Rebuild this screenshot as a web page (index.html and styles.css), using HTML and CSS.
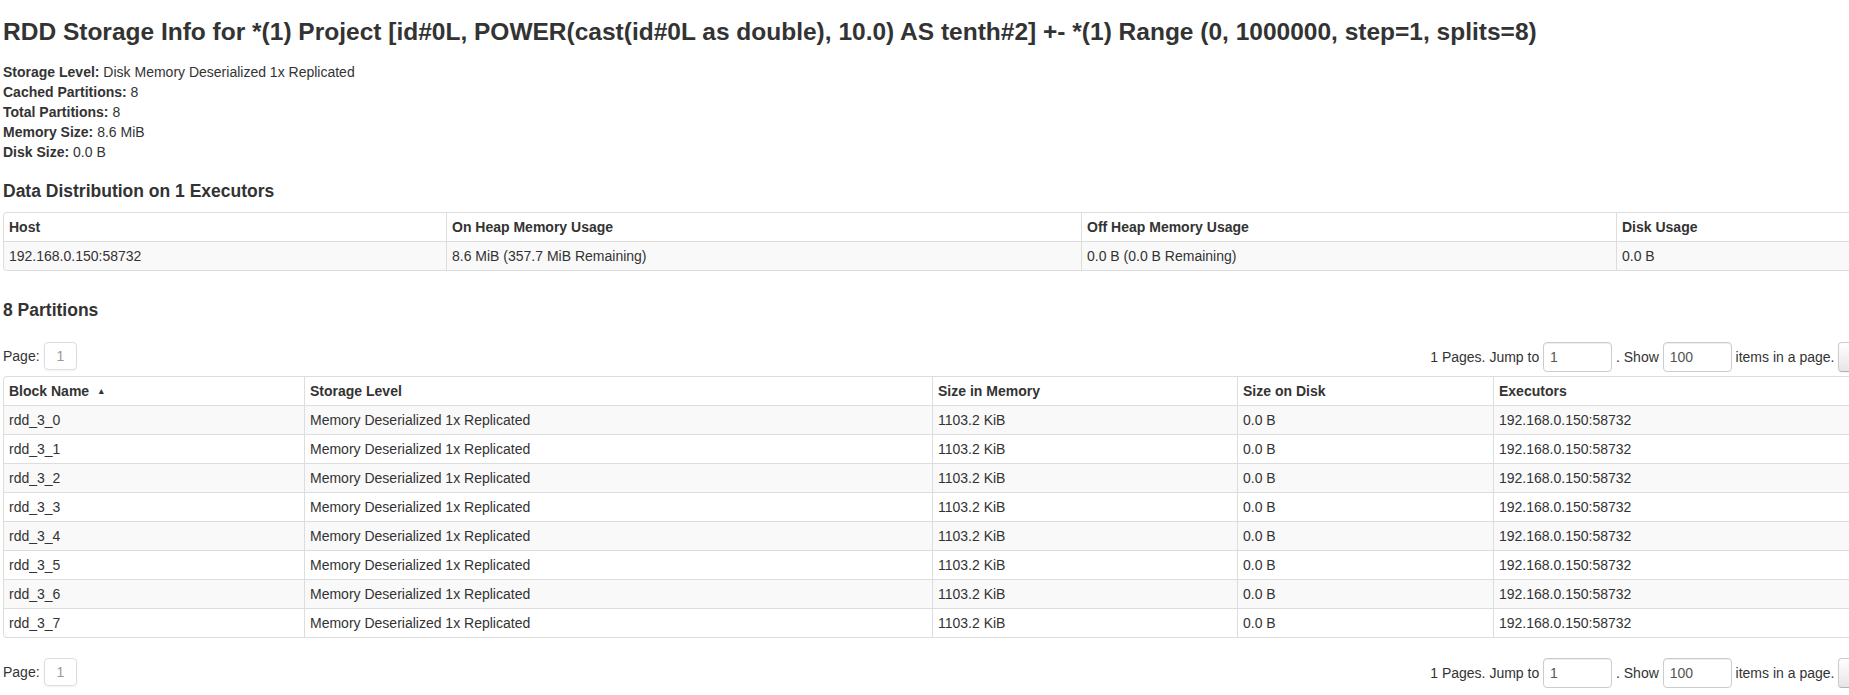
FILE: index.html
```html
<!DOCTYPE html>
<html>
<head>
<meta charset="utf-8">
<title>RDD Storage Info</title>
<link rel="stylesheet" href="styles.css">
</head>
<body>
<div class="page">
  <h3 class="title">RDD Storage Info for *(1) Project [id#0L, POWER(cast(id#0L as double), 10.0) AS tenth#2] +- *(1) Range (0, 1000000, step=1, splits=8)</h3>
  <ul class="summary">
    <li><strong>Storage Level:</strong> Disk Memory Deserialized 1x Replicated</li>
    <li><strong>Cached Partitions:</strong> 8</li>
    <li><strong>Total Partitions:</strong> 8</li>
    <li><strong>Memory Size:</strong> 8.6 MiB</li>
    <li><strong>Disk Size:</strong> 0.0 B</li>
  </ul>

  <h4 class="section first">Data Distribution on 1 Executors</h4>
  <table class="grid">
    <colgroup>
      <col class="e1"><col class="e2"><col class="e3"><col class="e4">
    </colgroup>
    <thead>
      <tr><th>Host</th><th>On Heap Memory Usage</th><th>Off Heap Memory Usage</th><th>Disk Usage</th></tr>
    </thead>
    <tbody>
      <tr><td>192.168.0.150:58732</td><td>8.6 MiB (357.7 MiB Remaining)</td><td>0.0 B (0.0 B Remaining)</td><td>0.0 B</td></tr>
    </tbody>
  </table>

  <h4 class="section second">8 Partitions</h4>

  <div class="pager top">
    <div class="pages"><span class="pages-label">Page:</span><span class="page-box">1</span></div>
    <form class="jump">
      <label>1 Pages. Jump to</label> <input class="field" type="text" value="1"> <label>. Show</label> <input class="field" type="text" value="100"> <label>items in a page.</label> <button type="button" class="btn">Go</button>
    </form>
  </div>

  <table class="grid blocks">
    <colgroup>
      <col class="b1"><col class="b2"><col class="b3"><col class="b4"><col class="b5">
    </colgroup>
    <thead>
      <tr><th>Block Name<span class="arrow">&#x25B4;</span></th><th>Storage Level</th><th>Size in Memory</th><th>Size on Disk</th><th>Executors</th></tr>
    </thead>
    <tbody>
      <tr><td>rdd_3_0</td><td>Memory Deserialized 1x Replicated</td><td>1103.2 KiB</td><td>0.0 B</td><td>192.168.0.150:58732</td></tr>
      <tr><td>rdd_3_1</td><td>Memory Deserialized 1x Replicated</td><td>1103.2 KiB</td><td>0.0 B</td><td>192.168.0.150:58732</td></tr>
      <tr><td>rdd_3_2</td><td>Memory Deserialized 1x Replicated</td><td>1103.2 KiB</td><td>0.0 B</td><td>192.168.0.150:58732</td></tr>
      <tr><td>rdd_3_3</td><td>Memory Deserialized 1x Replicated</td><td>1103.2 KiB</td><td>0.0 B</td><td>192.168.0.150:58732</td></tr>
      <tr><td>rdd_3_4</td><td>Memory Deserialized 1x Replicated</td><td>1103.2 KiB</td><td>0.0 B</td><td>192.168.0.150:58732</td></tr>
      <tr><td>rdd_3_5</td><td>Memory Deserialized 1x Replicated</td><td>1103.2 KiB</td><td>0.0 B</td><td>192.168.0.150:58732</td></tr>
      <tr><td>rdd_3_6</td><td>Memory Deserialized 1x Replicated</td><td>1103.2 KiB</td><td>0.0 B</td><td>192.168.0.150:58732</td></tr>
      <tr><td>rdd_3_7</td><td>Memory Deserialized 1x Replicated</td><td>1103.2 KiB</td><td>0.0 B</td><td>192.168.0.150:58732</td></tr>
    </tbody>
  </table>

  <div class="pager bottom">
    <div class="pages"><span class="pages-label">Page:</span><span class="page-box">1</span></div>
    <form class="jump">
      <label>1 Pages. Jump to</label> <input class="field" type="text" value="1"> <label>. Show</label> <input class="field" type="text" value="100"> <label>items in a page.</label> <button type="button" class="btn">Go</button>
    </form>
  </div>
</div>
</body>
</html>
```

FILE: styles.css
```css
html, body {
  margin: 0;
  padding: 0;
  background: #fff;
  overflow: hidden;
}

body {
  font-family: "Liberation Sans", Arial, Helvetica, sans-serif;
  font-size: 14px;
  line-height: 20px;
  color: #333;
}

.page {
  display: flex;
  flex-direction: column;
  width: 1880px;
  margin-left: 3px;
}

.title {
  margin: 12px 0 0;
  font-size: 24.5px;
  line-height: 40px;
  font-weight: bold;
  color: #333;
  white-space: nowrap;
}

.summary {
  list-style: none;
  margin: 10px 0 0;
  padding: 0;
}

.summary li {
  line-height: 20px;
}

.section {
  margin: 0;
  font-size: 17.5px;
  line-height: 20px;
  font-weight: bold;
}

.section.first {
  margin-top: 19px;
}

.section.second {
  margin-top: 29px;
}

.grid {
  width: 1880px;
  table-layout: fixed;
  border-collapse: separate;
  border-spacing: 0;
  border: 1px solid #ddd;
  border-left: 0;
  border-radius: 4px;
  margin-top: 11px;
}

.grid th,
.grid td {
  height: 20px;
  padding: 4px 5px;
  line-height: 20px;
  text-align: left;
  vertical-align: top;
  border-left: 1px solid #ddd;
  border-top: 1px solid #ddd;
  white-space: nowrap;
  overflow: hidden;
}

.grid thead tr:first-child th {
  border-top: 0;
  font-weight: bold;
  background: #fff;
}

.grid tbody tr:nth-child(odd) td {
  background: #f9f9f9;
}

.grid thead tr:first-child th:first-child {
  border-top-left-radius: 4px;
}

.grid tbody tr:last-child td:first-child {
  border-bottom-left-radius: 4px;
}

.e1 { width: 443px; }
.e2 { width: 635px; }
.e3 { width: 535px; }
.e4 { width: 266px; }

.b1 { width: 301px; }
.b2 { width: 628px; }
.b3 { width: 305px; }
.b4 { width: 256px; }
.b5 { width: 389px; }

.blocks {
  margin-top: 4px;
}

.arrow {
  display: inline-block;
  margin-left: 10px;
  font-size: 9px;
  line-height: 0;
  vertical-align: 2px;
}

.pager {
  display: flex;
  justify-content: space-between;
  align-items: flex-start;
  height: 30px;
}

.pager.top {
  margin-top: 22px;
}

.pager.bottom {
  margin-top: 20px;
}

.pages {
  display: flex;
  align-items: flex-start;
}

.pages-label {
  padding-top: 4px;
  padding-right: 4px;
  color: #333;
}

.page-box {
  display: inline-block;
  box-sizing: border-box;
  height: 28px;
  padding: 3px 12px;
  line-height: 20px;
  color: #999;
  border: 1px solid #ddd;
  border-radius: 4px;
  box-shadow: 0 1px 2px rgba(0, 0, 0, 0.05);
}

.jump {
  margin: 0;
  white-space: nowrap;
}

.jump label {
  display: inline-block;
  vertical-align: middle;
}

.field {
  display: inline-block;
  vertical-align: middle;
  box-sizing: border-box;
  width: 69px;
  height: 30px;
  padding: 4px 6px;
  margin: 0;
  font-family: inherit;
  font-size: 14px;
  line-height: 20px;
  color: #555;
  background: #fff;
  border: 1px solid #ccc;
  border-radius: 4px;
  box-shadow: inset 0 1px 1px rgba(0, 0, 0, 0.075);
}

.btn {
  display: inline-block;
  vertical-align: middle;
  box-sizing: border-box;
  height: 30px;
  padding: 4px 12px;
  margin: 0;
  font-family: inherit;
  font-size: 14px;
  line-height: 20px;
  color: #333;
  background: linear-gradient(#fff, #e6e6e6);
  border: 1px solid #ccc;
  border-bottom-color: #b3b3b3;
  border-radius: 4px;
  box-shadow: inset 0 1px 0 rgba(255, 255, 255, 0.2), 0 1px 2px rgba(0, 0, 0, 0.05);
}
```
